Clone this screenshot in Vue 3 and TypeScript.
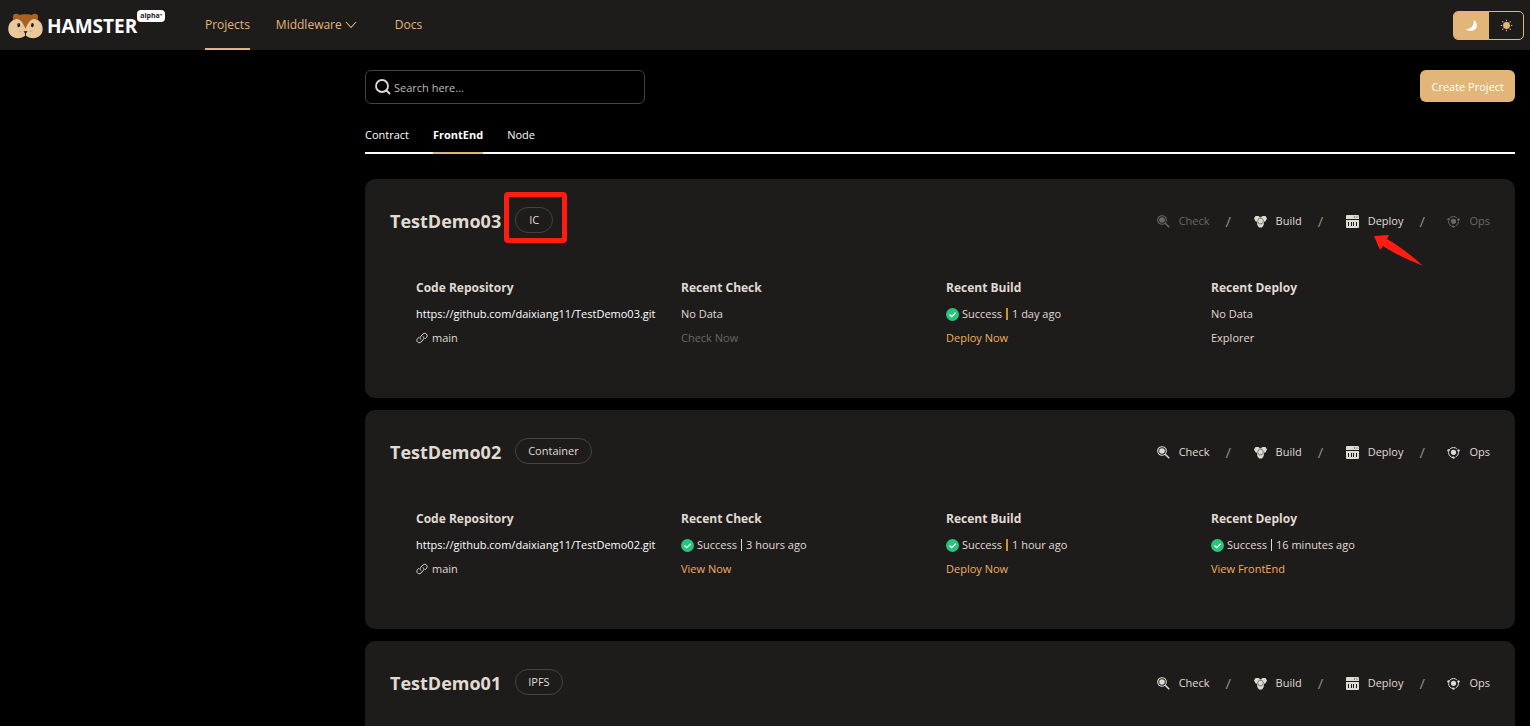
<script setup lang="ts">
import { ref } from 'vue'

interface Cell {
  title: string
  status: string
  time?: string
  action: string
  tone: 'gold' | 'muted' | 'plain'
}
interface Project {
  name: string
  type: string
  disabled: string[]
  cells: Cell[]
  marked?: boolean
}

const theme = ref('dark')
const query = ref('')
const tabs = ['Contract', 'FrontEnd', 'Node']
const activeTab = ref('FrontEnd')
const actions = ['Check', 'Build', 'Deploy', 'Ops']

const projects: Project[] = [
  {
    name: 'TestDemo03',
    type: 'IC',
    disabled: ['Check', 'Ops'],
    marked: true,
    cells: [
      { title: 'Recent Check', status: 'No Data', action: 'Check Now', tone: 'muted' },
      { title: 'Recent Build', status: 'Success', time: '1 day ago', action: 'Deploy Now', tone: 'gold' },
      { title: 'Recent Deploy', status: 'No Data', action: 'Explorer', tone: 'plain' },
    ],
  },
  {
    name: 'TestDemo02',
    type: 'Container',
    disabled: [],
    cells: [
      { title: 'Recent Check', status: 'Success', time: '3 hours ago', action: 'View Now', tone: 'gold' },
      { title: 'Recent Build', status: 'Success', time: '1 hour ago', action: 'Deploy Now', tone: 'gold' },
      { title: 'Recent Deploy', status: 'Success', time: '16 minutes ago', action: 'View FrontEnd', tone: 'gold' },
    ],
  },
  { name: 'TestDemo01', type: 'IPFS', disabled: [], cells: [] },
]
</script>

<template>
  <div class="page">
    <header class="topbar">
      <a class="brand" href="#">
        <svg class="mascot" viewBox="0 0 36 26" aria-hidden="true">
          <circle cx="8.500" cy="4" r="3.500" fill="#a9621f" />
          <circle cx="27.500" cy="4" r="3.500" fill="#a9621f" />
          <path d="M4 9C7 2 12 1 18 1s11 1 14 8c2 5 0 12-6 14H10C4 21 2 14 4 9z" fill="#a9621f" />
          <path d="M.3 16C.3 10 4 7 8 6c5-1 8 5 10 10 2-5 5-11 10-10 4 1 7.700 4 7.700 10 0 6-4.700 9.500-9.700 9.500-3 0-6-1-8-3-2 2-5 3-8 3-5 0-9.700-3.500-9.700-9.500z" fill="#e9c89c" />
          <ellipse cx="11" cy="12" rx="1.500" ry="2.200" fill="#16110d" />
          <ellipse cx="25" cy="12" rx="1.500" ry="2.200" fill="#16110d" />
          <circle cx="10.500" cy="11" r=".5" fill="#fff" />
          <circle cx="24.500" cy="11" r=".5" fill="#fff" />
          <path d="M15.800 18.500h4.400L18 21z" fill="#16110d" />
          <path d="M18 20v3" stroke="#16110d" stroke-width="1" />
          <circle cx="12.500" cy="19" r=".5" fill="#8a5a2c" />
          <circle cx="23.500" cy="18.500" r=".5" fill="#8a5a2c" />
        </svg>
        <span class="wordmark">HAMSTER</span>
        <span class="alpha">alpha⁺</span>
      </a>
      <nav class="nav">
        <a class="nav-item current" href="#projects">Projects</a>
        <a class="nav-item" href="#middleware">Middleware
          <svg class="caret" viewBox="0 0 12 8" aria-hidden="true"><path d="M1 1l5 5.500L11 1" fill="none" stroke="currentColor" stroke-width="1.100" /></svg>
        </a>
        <a class="nav-item docs" href="#docs">Docs</a>
      </nav>
      <div class="themes">
        <button type="button" class="theme" :class="{ on: theme === 'dark' }" aria-label="Dark theme" @click="theme = 'dark'">
          <svg viewBox="0 0 14 14" aria-hidden="true"><path d="M9.200 1.200c3 1.600 4.600 5 3.200 7.900-1.800 3.800-8.600 5.200-11.700 1.300 1.700.5 4 .3 5.800-1.300C9 7 9.900 4 9.200 1.200z" fill="currentColor" /></svg>
        </button>
        <button type="button" class="theme" :class="{ on: theme === 'light' }" aria-label="Light theme" @click="theme = 'light'">
          <svg viewBox="0 0 14 14" aria-hidden="true">
            <circle cx="7" cy="7" r="3.700" fill="currentColor" />
            <path d="M7 .8v1.500M7 11.700v1.500M.8 7h1.500M11.700 7h1.500M2.600 2.600l1 1M10.400 10.400l1 1M2.600 11.400l1-1M10.400 3.600l1-1" stroke="currentColor" stroke-width="1.200" />
          </svg>
        </button>
      </div>
    </header>

    <main class="content">
      <div class="toolbar">
        <label class="search">
          <svg viewBox="0 0 16 16" aria-hidden="true"><circle cx="7" cy="7" r="6" fill="none" stroke="#e0dbd2" stroke-width="1.800" /><path d="M11 11l4 4" stroke="#e0dbd2" stroke-width="2" /></svg>
          <input v-model="query" type="text" placeholder="Search here..." aria-label="Search projects" />
        </label>
        <button type="button" class="create">Create Project</button>
      </div>

      <div class="tabs" role="tablist">
        <button v-for="tab in tabs" :key="tab" type="button" role="tab" class="tab" :class="{ active: tab === activeTab }" :aria-selected="tab === activeTab" @click="activeTab = tab">{{ tab }}</button>
      </div>

      <section v-for="project in projects" :key="project.name" class="card">
        <div class="card-head">
          <h2>{{ project.name }}</h2>
          <span class="badge">{{ project.type }}<span v-if="project.marked" class="mark-box"></span></span>
          <div class="actions">
            <template v-for="(action, i) in actions" :key="action">
              <span v-if="i > 0" class="slash">/</span>
              <button type="button" class="action" :disabled="project.disabled.includes(action)">
                <svg v-if="action === 'Check'" viewBox="0 0 13 13" aria-hidden="true">
                  <circle cx="5" cy="5" r="4.300" fill="none" stroke="currentColor" stroke-width="1.100" />
                  <circle cx="5" cy="5" r="2.800" fill="currentColor" />
                  <path d="M8.200 8.200l4 4" stroke="currentColor" stroke-width="1.500" />
                </svg>
                <svg v-else-if="action === 'Build'" viewBox="0 0 13 13" aria-hidden="true">
                  <path d="M1.500 1h3l1.600 1.300h.8L8.500 1h3L13 3.600 11.500 6.200 9.900 6.900 9.700 10 8 12.500H5L3.300 10 3.100 6.900 1.500 6.200 0 3.600z" fill="currentColor" />
                  <path d="M5 3.200h3L9.500 6 8 8.800H5L3.500 6z" fill="none" stroke="#1e1c1b" stroke-width=".5" />
                </svg>
                <svg v-else-if="action === 'Deploy'" viewBox="0 0 13 13" aria-hidden="true">
                  <path d="M.7 0h11.600l.7.700V4H0V.7zM0 5h13v7.300l-.7.700H.7l-.7-.7z" fill="currentColor" />
                  <path d="M8 2h1M10.500 2h1M2.500 7v4M5.500 7v4M7.500 7v4M10.500 7v4" stroke="#1e1c1b" stroke-width="1" />
                </svg>
                <svg v-else viewBox="0 0 13 13" aria-hidden="true">
                  <circle cx="6.500" cy="6.500" r="5" fill="none" stroke="currentColor" stroke-width="1" stroke-dasharray="8.500 1.970" stroke-dashoffset="3" />
                  <circle cx="6.500" cy="6.300" r="2.600" fill="currentColor" />
                  <circle cx="1.500" cy="4.500" r="1.200" fill="currentColor" />
                  <circle cx="11.500" cy="4.500" r="1.200" fill="currentColor" />
                  <circle cx="6.500" cy="11.600" r="1.200" fill="currentColor" />
                </svg>
                {{ action }}
                <svg v-if="project.marked && action === 'Deploy'" class="mark-arrow" viewBox="0 0 50 32" aria-hidden="true"><path d="M0 1l15-1-2 4c14 8 25 17 36 27C35 25 21 19 9 11L6 15z" fill="#ff1d12" /></svg>
              </button>
            </template>
          </div>
        </div>
        <div v-if="project.cells.length" class="details">
          <div class="cell">
            <h3>Code Repository</h3>
            <p><a class="repo" :href="`https://github.com/daixiang11/${project.name}.git`">https://github.com/daixiang11/{{ project.name }}.git</a></p>
            <p class="branch">
              <svg viewBox="0 0 12 12" aria-hidden="true"><g fill="none" stroke="currentColor" stroke-width="1" stroke-linecap="round"><path d="M4.700 7.300C3.700 6.200 3.900 5.200 4.700 4.400L7 2c2.400-2.200 5.600 1 3.400 3.400L9.200 6.600" /><path d="M7.300 4.700C8.300 5.800 8.100 6.800 7.300 7.600L5 10c-2.400 2.200-5.600-1-3.400-3.400L2.800 5.400" /></g></svg>
              main
            </p>
          </div>
          <div v-for="cell in project.cells" :key="cell.title" class="cell">
            <h3>{{ cell.title }}</h3>
            <p>
              <svg v-if="cell.time" class="ok" viewBox="0 0 13 13" aria-hidden="true"><circle cx="6.500" cy="6.500" r="6.500" fill="#27c47c" /><path d="M3.500 6.500l2.200 2.200 4-4" fill="none" stroke="#fff" stroke-width="1.300" /></svg>
              <span>{{ cell.status }}</span>
              <template v-if="cell.time"><span class="bar" :class="{ amber: cell.title === 'Recent Build' }"></span><span>{{ cell.time }}</span></template>
            </p>
            <p><a :class="cell.tone" href="#">{{ cell.action }}</a></p>
          </div>
        </div>
      </section>
    </main>
  </div>
</template>

<style>
body {
  background: #000;
}
</style>

<style scoped>
.page {
  height: 100vh;
  overflow: hidden;
  background: #000;
  color: #e0dbd2;
  font: 11px/16px "Open Sans", "Noto Sans", sans-serif;
}
.page * {
  box-sizing: border-box;
}
a {
  color: inherit;
  text-decoration: none;
}
button {
  font: inherit;
  color: inherit;
  background: none;
  border: 0;
  padding: 0;
  cursor: pointer;
}
h2, h3, p {
  margin: 0;
}
svg {
  display: block;
  flex: none;
}
.topbar {
  display: flex;
  align-items: center;
  height: 50px;
  padding: 0 6px 0 8px;
  background: #1e1c1b;
}
.brand {
  display: flex;
  align-items: center;
  width: 197px;
  height: 50px;
  padding-top: 2px;
  color: #fff;
}
.mascot {
  width: 35px;
  height: 26px;
}
.wordmark {
  margin-left: 4px;
  font: bold 19px/26px "Open Sans", sans-serif;
}
.alpha {
  align-self: flex-start;
  margin-top: 8px;
  padding: 0 3px;
  border-radius: 4px;
  background: #fff;
  color: #1e1c1b;
  font-size: 7px;
  font-weight: 700;
  line-height: 12px;
}
.nav {
  display: flex;
  gap: 26px;
  color: #e2b578;
  font-size: 12px;
}
.nav-item {
  display: flex;
  align-items: center;
  gap: 3px;
  height: 50px;
  padding-top: 2px;
  border-bottom: 2px solid transparent;
}
.nav-item.current {
  border-color: #e2b578;
}
.docs {
  margin-left: 12px;
}
.caret {
  width: 12px;
  height: 8px;
}
.themes {
  display: flex;
  margin-left: auto;
  border: 1px solid #e2b578;
  border-radius: 5px;
  overflow: hidden;
}
.theme {
  display: grid;
  place-items: center;
  width: 34px;
  height: 27px;
  color: #e2b578;
}
.theme.on {
  width: 35px;
  background: #e2b578;
  color: #fff;
}
.theme svg {
  width: 13px;
  height: 13px;
}
.content {
  padding: 20px 15px 0 365px;
}
.toolbar {
  display: flex;
  justify-content: space-between;
  align-items: flex-start;
}
.search {
  display: flex;
  align-items: center;
  gap: 3px;
  width: 280px;
  height: 34px;
  padding: 0 9px;
  border: 1px solid #434343;
  border-radius: 6px;
}
.search svg {
  width: 16px;
  height: 16px;
}
.search input {
  flex: 1;
  min-width: 0;
  padding: 2px 0 0;
  border: 0;
  outline: 0;
  background: none;
  color: #e0dbd2;
  font: inherit;
}
.search input::placeholder {
  color: #bfbbb4;
  opacity: 1;
}
.create {
  height: 32px;
  padding: 2px 11px 0;
  border-radius: 6px;
  background: #e2b578;
  color: #fff;
}
.tabs {
  display: flex;
  gap: 24px;
  height: 34px;
  margin: 16px 0 25px;
  border-bottom: 2px solid #fff;
  color: #fff;
}
.tab {
  height: 34px;
  padding-bottom: 2px;
  border-bottom: 2px solid transparent;
}
.tab.active {
  border-color: #e2b578;
  font-weight: 700;
}
.card {
  height: 219px;
  margin-bottom: 12px;
  padding: 28px 25px 0;
  border-radius: 10px;
  background: #1e1c1b;
}
.card-head {
  display: flex;
  align-items: center;
  height: 26px;
}
h2 {
  padding-top: 2px;
  font-size: 18px;
  line-height: 26px;
  font-weight: 700;
}
.badge {
  position: relative;
  min-width: 38px;
  height: 26px;
  margin-left: 14px;
  padding: 0 12px;
  border: 1px solid #434343;
  border-radius: 13px;
  line-height: 24px;
  text-align: center;
}
.mark-box {
  position: absolute;
  inset: -16px -15px -11px -12px;
  border: 5px solid #ff1d12;
  border-radius: 4px;
}
.actions {
  display: flex;
  align-items: center;
  margin-left: auto;
  padding-top: 2px;
}
.action {
  position: relative;
  display: flex;
  align-items: center;
  gap: 9px;
}
.action:disabled {
  color: #6a6764;
  cursor: default;
}
.action svg {
  width: 13px;
  height: 13px;
}
.action .mark-arrow {
  position: absolute;
  top: 22px;
  left: 28px;
  width: 50px;
  height: 32px;
}
.slash {
  width: 6px;
  margin: 0 22px 0 16px;
  color: #8f8b86;
  font-size: 15px;
}
.details {
  display: grid;
  grid-template-columns: repeat(4, 1fr);
  margin-top: 46px;
  padding: 0 14px 0 26px;
}
h3 {
  height: 18px;
  margin-bottom: 9px;
  font-size: 12px;
  line-height: 18px;
  font-weight: 700;
}
.cell p {
  display: flex;
  align-items: center;
  height: 16px;
  margin-bottom: 8px;
  white-space: nowrap;
}
.repo {
  color: #fff;
}
.branch svg {
  width: 12px;
  height: 12px;
  margin-right: 4px;
}
.ok {
  width: 13px;
  height: 13px;
  margin-right: 3px;
}
.bar {
  width: 1px;
  height: 12px;
  margin: 0 4px;
  background: #e0dbd2;
}
.gold {
  color: #eeb063;
}
.bar.amber {
  width: 2px;
  background: #cf9030;
}
.muted {
  color: #6a6764;
}
</style>
